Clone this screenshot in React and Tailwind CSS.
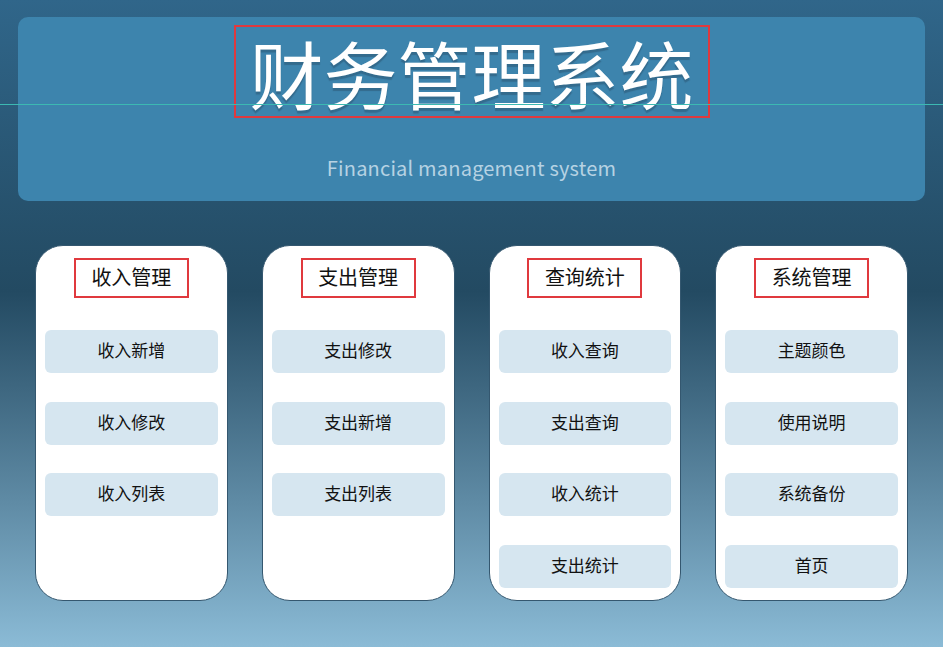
const groups = [
  { title: "收入管理", items: ["收入新增", "收入修改", "收入列表"] },
  { title: "支出管理", items: ["支出修改", "支出新增", "支出列表"] },
  { title: "查询统计", items: ["收入查询", "支出查询", "收入统计", "支出统计"] },
  { title: "系统管理", items: ["主题颜色", "使用说明", "系统备份", "首页"] },
];

function MenuCard({ title, items }) {
  return (
    <div className="w-[193px] h-[356px] bg-white rounded-[28px] border border-[#34576f] flex flex-col items-center px-[9px] pt-[12px]">
      <div className="w-[115px] h-[40px] border-2 border-[#e0393e] flex items-center justify-center pb-[2px] text-[20px] text-[#111]">
        {title}
      </div>
      <div className="mt-[32px] w-full flex flex-col gap-[28.5px]">
        {items.map((item) => (
          <button
            key={item}
            className="h-[43px] w-full rounded-[6px] bg-[#d6e6f0] pb-[3px] text-[17px] text-[#111]"
          >
            {item}
          </button>
        ))}
      </div>
    </div>
  );
}

export default function App() {
  return (
    <div
      className="relative w-full h-[647px] overflow-hidden bg-linear-to-b from-[#30668a] via-[#234a62] via-45% to-[#8bbbd6]"
      style={{ fontFamily: '"Noto Sans CJK SC", "Noto Sans", sans-serif' }}
    >
      <header className="mx-[18px] mt-[17px] h-[184px] rounded-[10px] bg-[#3d84ad] flex flex-col items-center">
        <div className="mt-[8px] w-[476px] h-[93px] border-2 border-[#e0393e] flex items-center justify-center">
          <h1 className="text-[74px] leading-none font-normal text-white [text-shadow:0_3px_1px_rgba(30,50,70,0.3)]">
            财务管理系统
          </h1>
        </div>
        <p className="mt-[35px] text-[20px] text-[#b6d2e3] tracking-[0.2px]">
          Financial management system
        </p>
      </header>

      <div className="absolute left-0 right-0 top-[104px] h-px bg-[#3cb9b2]" />

      <main className="mt-[44px] px-[35px] flex gap-[34px]">
        {groups.map((g) => (
          <MenuCard key={g.title} title={g.title} items={g.items} />
        ))}
      </main>
    </div>
  );
}
